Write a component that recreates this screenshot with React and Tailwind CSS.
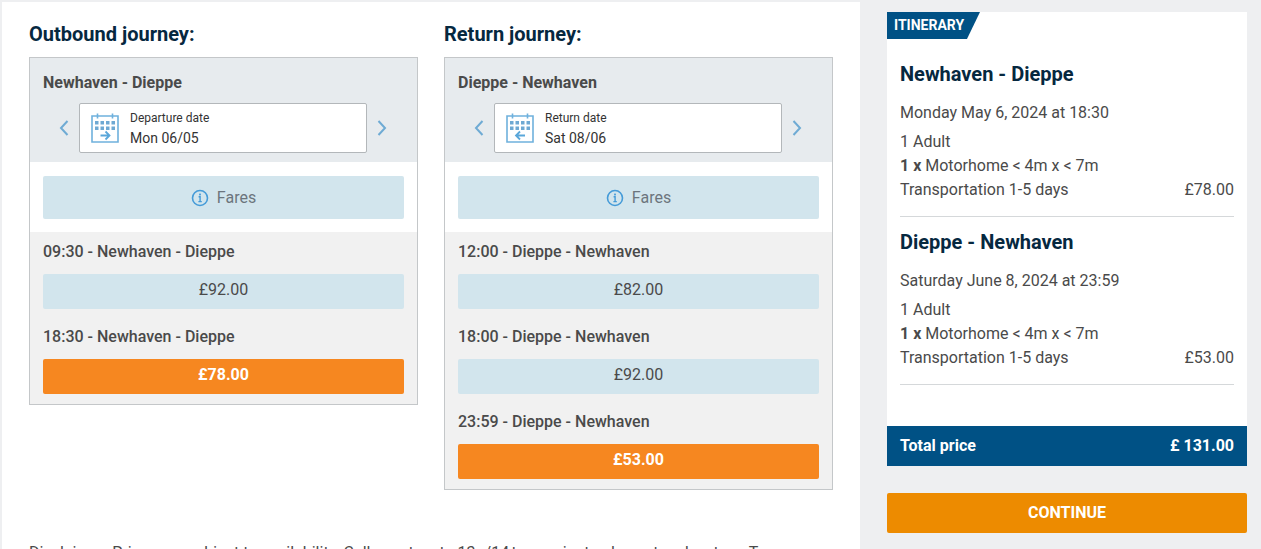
import clsx from "clsx";

const journeys = [
  {
    id: "outbound",
    heading: "Outbound journey:",
    route: "Newhaven - Dieppe",
    dateLabel: "Departure date",
    date: "Mon 06/05",
    sailings: [
      { time: "09:30", price: "£92.00" },
      { time: "18:30", price: "£78.00", selected: true },
    ],
  },
  {
    id: "return",
    heading: "Return journey:",
    route: "Dieppe - Newhaven",
    dateLabel: "Return date",
    date: "Sat 08/06",
    sailings: [
      { time: "12:00", price: "£82.00" },
      { time: "18:00", price: "£92.00" },
      { time: "23:59", price: "£53.00", selected: true },
    ],
  },
];

const itinerary = [
  {
    route: "Newhaven - Dieppe",
    date: "Monday May 6, 2024 at 18:30",
    price: "£78.00",
  },
  {
    route: "Dieppe - Newhaven",
    date: "Saturday June 8, 2024 at 23:59",
    price: "£53.00",
  },
];

function Chevron({ direction }) {
  return (
    <svg width="10" height="18" viewBox="0 0 10 18" fill="none">
      <path
        d={direction === "left" ? "M8.5 2 2 9l6.5 7" : "M1.5 2 8 9l-6.5 7"}
        stroke="#6fabd4"
        strokeWidth="2"
      />
    </svg>
  );
}

function CalendarIcon({ direction }) {
  return (
    <svg width="28" height="30" viewBox="0 0 28 30" fill="none">
      <path
        d="M1 3h26v26H1zM6.5 .5v5M21.5 .5v5"
        stroke="#6fb1dd"
        strokeWidth="1.6"
      />
      {[8, 13.5].map((y) =>
        [4, 9.5, 15, 20.5].map((x) => (
          <rect key={`${x}-${y}`} x={x} y={y} width="3.5" height="3.5" fill="#6fa9d3" />
        ))
      )}
      <path
        d={
          direction === "return"
            ? "M19 22.5h-9M14 18.5l-4 4 4 4"
            : "M9.5 22.5h9M14.5 18.5l4 4-4 4"
        }
        stroke="#5aa7da"
        strokeWidth="1.8"
      />
    </svg>
  );
}

function InfoIcon() {
  return (
    <svg width="18" height="18" viewBox="0 0 18 18" fill="none">
      <circle cx="9" cy="9" r="7.5" stroke="#459bd8" strokeWidth="1.6" />
      <path d="M7.6 7.8h1.5v4.6M7.4 12.6h3.4" stroke="#459bd8" strokeWidth="1.4" />
      <rect x="8.1" y="4.6" width="1.8" height="1.8" fill="#459bd8" />
    </svg>
  );
}

function Journey({ journey }) {
  return (
    <section className="flex-1 min-w-0">
      <h2 className="text-xl leading-6 font-bold text-[#06283f] mb-[11px]">
        {journey.heading}
      </h2>
      <div className="border border-[#c4c7c9]">
        <div className="bg-[#e7ebee] pt-[13px] pb-[9px]">
          <h3 className="px-[13px] text-base leading-6 font-bold text-[#4a4a4a] mb-2">
            {journey.route}
          </h3>
          <div className="flex items-center pl-[29px] pr-[30px] gap-[10px]">
            <button type="button" aria-label="Previous day">
              <Chevron direction="left" />
            </button>
            <button
              type="button"
              className="flex-1 h-[50px] flex items-center gap-[11px] pl-[11px] bg-white border border-[#b3b7ba] rounded-xs text-left text-[#333]"
            >
              <CalendarIcon direction={journey.id} />
              <span className="flex flex-col">
                <span className="text-xs leading-5">{journey.dateLabel}</span>
                <span className="text-sm leading-5">{journey.date}</span>
              </span>
            </button>
            <button type="button" aria-label="Next day">
              <Chevron direction="right" />
            </button>
          </div>
        </div>
        <div className="px-[13px] pt-[14px] pb-[13px]">
          <button
            type="button"
            className="w-full h-[43px] flex items-center justify-center gap-2 bg-[#d2e5ed] rounded-xs text-base text-[#6c757d]"
          >
            <InfoIcon />
            Fares
          </button>
        </div>
        <div className="bg-[#f1f1f1] px-[13px] pt-2 pb-[10px] flex flex-col gap-4">
          {journey.sailings.map((sailing) => (
            <div key={sailing.time}>
              <p className="text-base leading-6 font-medium text-[#4a4a4a] mb-[10px]">
                {sailing.time} - {journey.route}
              </p>
              <button
                type="button"
                className={clsx(
                  "block w-full h-[35px] pb-[3px] rounded-xs text-base",
                  sailing.selected
                    ? "bg-[#f68720] font-bold text-white"
                    : "bg-[#d2e5ed] text-[#4a4a4a]"
                )}
              >
                {sailing.price}
              </button>
            </div>
          ))}
        </div>
      </div>
    </section>
  );
}

function ItineraryLeg({ leg }) {
  return (
    <div className="h-[168px] pt-[13px] border-b border-[#d5d8da] text-base leading-6 text-[#4a4a4a]">
      <h3 className="text-xl leading-6 font-bold text-[#06283f] mb-[15px]">
        {leg.route}
      </h3>
      <p className="mb-[5px]">{leg.date}</p>
      <p>1 Adult</p>
      <p>
        <b>1 x</b> Motorhome &lt; 4m x &lt; 7m
      </p>
      <p className="flex justify-between">
        <span>Transportation 1-5 days</span>
        <span>{leg.price}</span>
      </p>
    </div>
  );
}

export default function App() {
  return (
    <div className="h-screen overflow-hidden flex bg-[#eeeff1] pt-[2px] pl-[2px] font-['Roboto',sans-serif]">
      <main className="flex-1 min-w-0 bg-white px-[27px] pt-5">
        <div className="flex items-start gap-[26px]">
          {journeys.map((journey) => (
            <Journey key={journey.id} journey={journey} />
          ))}
        </div>
        <p className="mt-[51px] text-base leading-6 text-[#4a4a4a]">
          Disclaimer: Prices are subject to availability. Calls cost up to
          13p/14¢ per minute plus network extras. T
        </p>
      </main>
      <aside className="w-[401px] shrink-0 pl-[27px] pr-[14px] pt-[10px]">
        <div className="bg-white">
          <h2 className="w-[93px] h-[27px] pl-[7px] bg-[#005185] text-sm leading-[27px] font-bold text-white [clip-path:polygon(0_0,100%_0,86%_100%,0_100%)]">
            ITINERARY
          </h2>
          <div className="px-[13px] pt-[10px] pb-[41px]">
            {itinerary.map((leg) => (
              <ItineraryLeg key={leg.route} leg={leg} />
            ))}
          </div>
          <p className="h-10 px-[13px] flex items-center justify-between bg-[#005185] text-base font-bold text-white">
            <span>Total price</span>
            <span>£ 131.00</span>
          </p>
        </div>
        <button
          type="button"
          className="mt-[27px] block w-full h-10 rounded-xs bg-[#ed8b00] text-base font-bold text-white"
        >
          CONTINUE
        </button>
      </aside>
    </div>
  );
}
